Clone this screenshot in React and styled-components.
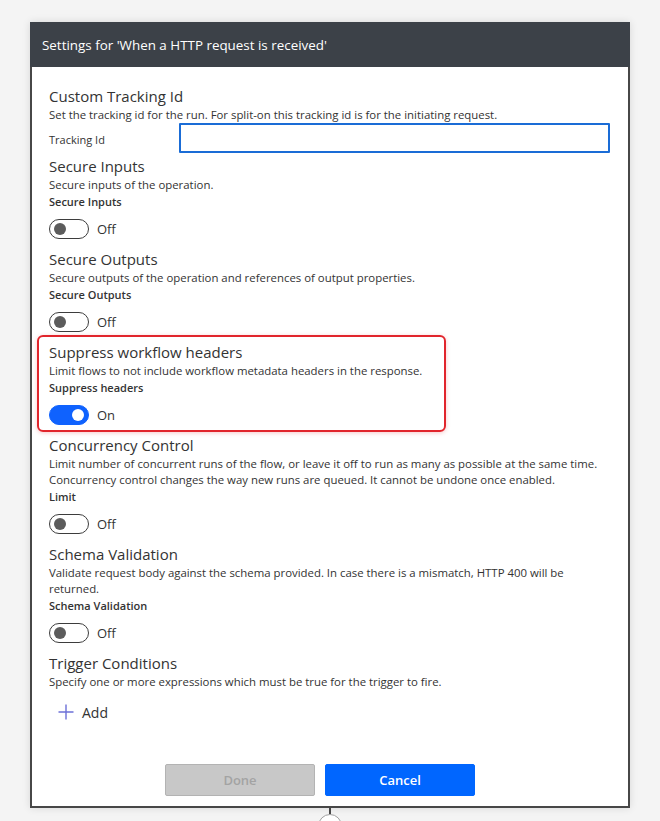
import React from "react";
import styled, { createGlobalStyle } from "styled-components";

const Global = createGlobalStyle`
  html, body { margin: 0; padding: 0; background: #f4f4f4; }
  body { font-family: "Open Sans", "Noto Sans", Arial, sans-serif; color: #323130; }
  * { box-sizing: border-box; }
`;

const Page = styled.div`
  width: 660px;
  height: 821px;
  padding: 22px 30px 0 30px;
  overflow: hidden;
  display: flex;
  flex-direction: column;
`;

const Panel = styled.div`
  width: 600px;
  background: #fff;
  box-shadow: 0 0 8px rgba(0, 0, 0, 0.12);
  display: flex;
  flex-direction: column;
`;

const Header = styled.div`
  height: 45px;
  background: #3c4148;
  color: #fff;
  font-size: 13.4px;
  display: flex;
  align-items: center;
  padding-left: 12px;
`;

const Body = styled.div`
  border: 2px solid #474747;
  border-top: none;
  padding: 19px 18px 10px 17px;
  display: flex;
  flex-direction: column;
`;

const Section = styled.div`
  display: flex;
  flex-direction: column;
  padding-bottom: ${(p) => p.$pb ?? 10}px;
`;

const Highlight = styled.div`
  width: 409px;
  margin: -7px 0 3px -12px;
  padding: 5px 10px 0 10px;
  border: 2px solid #e1252c;
  border-radius: 6px;
  box-shadow: 0 1px 4px rgba(225, 37, 44, 0.25);
`;

const Title = styled.div`
  font-size: 15px;
  font-weight: 400;
  line-height: 20px;
  height: 20px;
  color: #333;
  white-space: nowrap;
`;

const Desc = styled.div`
  font-size: 11.4px;
  line-height: 16px;
  padding-top: 1px;
  color: #333;
  max-width: ${(p) => p.$max || "none"};
`;

const Label = styled.div`
  font-size: 11px;
  font-weight: 600;
  line-height: 18px;
  color: #333;
`;

const FieldRow = styled.div`
  display: flex;
  align-items: flex-start;
  height: 33px;
`;

const FieldLabel = styled.div`
  width: 130px;
  font-size: 11px;
  line-height: 20px;
  padding-top: 7px;
  color: #333;
`;

const Input = styled.input`
  flex: 1;
  height: 30px;
  border: 2px solid #1a6cd6;
  border-radius: 1px;
  outline: none;
  font: inherit;
  padding: 0 8px;
`;

const ToggleRow = styled.div`
  display: flex;
  align-items: center;
  gap: 8px;
  margin-top: 8px;
  height: 20px;
`;

const Track = styled.div`
  width: 40px;
  height: 20px;
  border-radius: 10px;
  border: 1px solid ${(p) => (p.$on ? "#0f62fe" : "#3d3d3d")};
  background: ${(p) => (p.$on ? "#0f62fe" : "#fff")};
  display: flex;
  align-items: center;
  justify-content: ${(p) => (p.$on ? "flex-end" : "flex-start")};
  padding: 0 4px;
`;

const Knob = styled.div`
  width: 12px;
  height: 12px;
  border-radius: 50%;
  background: ${(p) => (p.$on ? "#fff" : "#5c5c5c")};
`;

const ToggleText = styled.span`
  font-size: 13px;
  color: #333;
`;

const AddRow = styled.div`
  display: flex;
  align-items: center;
  gap: 8px;
  height: 20px;
  margin-top: 12px;
  padding-left: 9px;
  font-size: 14px;
  color: #333;
`;

const Buttons = styled.div`
  display: flex;
  gap: 10px;
  margin-top: 32px;
  padding-left: 116px;
`;

const Button = styled.button`
  width: 150px;
  height: 32px;
  border-radius: 2px;
  font-family: inherit;
  font-size: 13px;
  font-weight: 600;
  border: 1px solid ${(p) => (p.$primary ? "#0066ff" : "#b3b3b3")};
  background: ${(p) => (p.$primary ? "#0066ff" : "#c8c8c8")};
  color: ${(p) => (p.$primary ? "#fff" : "#a3a3a3")};
  cursor: pointer;
`;

const Connector = styled.div`
  display: flex;
  flex-direction: column;
  align-items: center;
  width: 600px;
`;

const Line = styled.div`
  width: 2px;
  height: 6px;
  background: #474747;
`;

const Circle = styled.div`
  width: 24px;
  height: 24px;
  border-radius: 50%;
  border: 1px solid #a0a0a0;
  background: #fff;
`;

function Toggle({ on }) {
  return (
    <ToggleRow>
      <Track $on={on}>
        <Knob $on={on} />
      </Track>
      <ToggleText>{on ? "On" : "Off"}</ToggleText>
    </ToggleRow>
  );
}

function ToggleSection({ title, desc, label, on, pb, descMax }) {
  return (
    <Section $pb={pb}>
      <Title>{title}</Title>
      <Desc $max={descMax}>{desc}</Desc>
      <Label>{label}</Label>
      <Toggle on={on} />
    </Section>
  );
}

export default function App() {
  return (
    <>
      <Global />
      <Page>
        <Panel>
          <Header>Settings for 'When a HTTP request is received'</Header>
          <Body>
            <Section $pb={0}>
              <Title>Custom Tracking Id</Title>
              <Desc>Set the tracking id for the run. For split-on this tracking id is for the initiating request.</Desc>
              <FieldRow>
                <FieldLabel>Tracking Id</FieldLabel>
                <Input />
              </FieldRow>
            </Section>
            <ToggleSection
              title="Secure Inputs"
              desc="Secure inputs of the operation."
              label="Secure Inputs"
            />
            <ToggleSection
              title="Secure Outputs"
              desc="Secure outputs of the operation and references of output properties."
              label="Secure Outputs"
            />
            <Highlight>
              <ToggleSection
                pb={5}
                title="Suppress workflow headers"
                desc="Limit flows to not include workflow metadata headers in the response."
                label="Suppress headers"
                on
              />
            </Highlight>
            <ToggleSection
              title="Concurrency Control"
              desc="Limit number of concurrent runs of the flow, or leave it off to run as many as possible at the same time. Concurrency control changes the way new runs are queued. It cannot be undone once enabled."
              label="Limit"
            />
            <ToggleSection
              title="Schema Validation"
              desc="Validate request body against the schema provided. In case there is a mismatch, HTTP 400 will be returned."
              label="Schema Validation"
              descMax="550px"
            />
            <Section>
              <Title>Trigger Conditions</Title>
              <Desc>Specify one or more expressions which must be true for the trigger to fire.</Desc>
              <AddRow>
                <svg width="16" height="16" viewBox="0 0 16 16">
                  <path d="M8 0.5V15.5M0.5 8H15.5" stroke="#6c70d8" strokeWidth="1.4" fill="none" />
                </svg>
                <span>Add</span>
              </AddRow>
            </Section>
            <Buttons>
              <Button disabled>Done</Button>
              <Button $primary>Cancel</Button>
            </Buttons>
          </Body>
        </Panel>
        <Connector>
          <Line />
          <Circle />
        </Connector>
      </Page>
    </>
  );
}
